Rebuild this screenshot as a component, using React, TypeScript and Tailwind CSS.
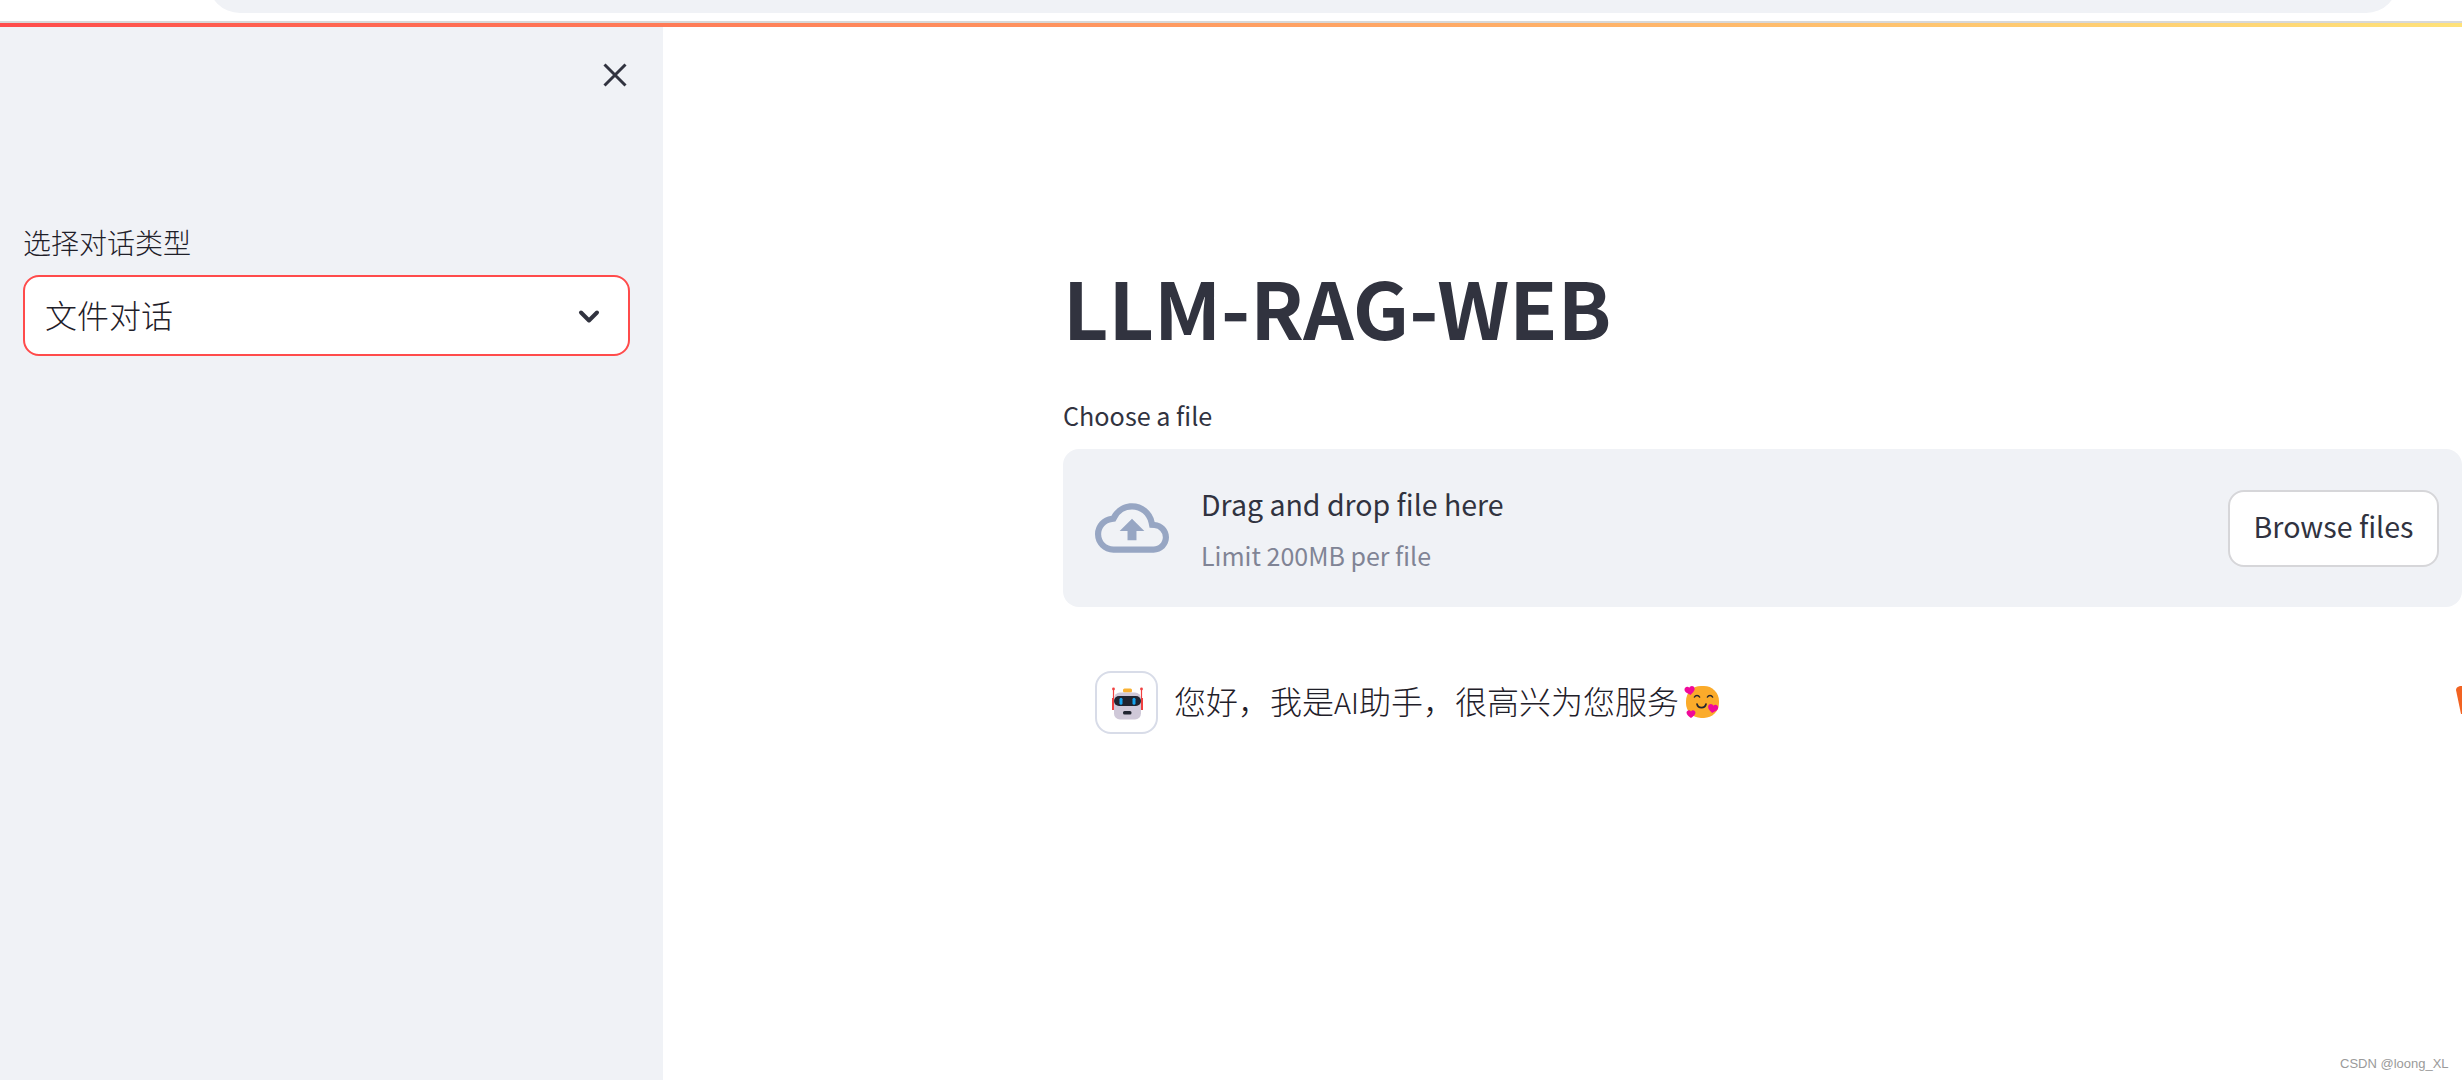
import { MdOutlineCloudUpload } from "react-icons/md";

const font = { fontFamily: '"Noto Sans CJK SC", sans-serif' };

function Robot() {
  return (
    <svg viewBox="0 0 40 40" width="40" height="40">
      <rect x="16" y="5.5" width="9" height="4" rx="1.5" fill="#f9b233" />
      <circle cx="6.5" cy="6" r="1.4" fill="#f04040" />
      <circle cx="34.5" cy="6" r="1.4" fill="#f04040" />
      <path d="M6.5 6v20M34.5 6v20" stroke="#f04040" strokeWidth="1.2" />
      <rect x="5" y="15" width="2.2" height="12" fill="#f04040" />
      <rect x="33.8" y="15" width="2.2" height="12" fill="#f04040" />
      <rect x="7" y="9.5" width="27" height="27" rx="6" fill="#cfc8d8" />
      <rect x="7" y="13" width="27" height="10" rx="5" fill="#202430" />
      <rect x="12.5" y="14.8" width="3" height="7" rx="1.5" fill="#16a4ee" />
      <rect x="25.5" y="14.8" width="3" height="7" rx="1.5" fill="#16a4ee" />
      <rect x="16" y="28" width="8.5" height="3.5" rx="1.5" fill="#202430" />
    </svg>
  );
}

function SmileHearts() {
  const heart = "M0 -2.6C-1.2 -5.4 -6 -4.8 -6 -1C-6 2 -2.2 4.4 0 6C2.2 4.4 6 2 6 -1C6 -4.8 1.2 -5.4 0 -2.6Z";
  return (
    <svg viewBox="0 0 38 36" width="38" height="36">
      <rect x="4" y="1" width="33" height="32" rx="15" fill="#fbab2a" />
      <path d="M12.5 12a2.8 2.8 0 0 1 5 0M25.5 12a2.8 2.8 0 0 1 5 0" fill="none" stroke="#26262c" strokeWidth="1.6" strokeLinecap="round" />
      <path d="M15 19a4.6 4.6 0 0 0 9 0" fill="none" stroke="#26262c" strokeWidth="1.7" strokeLinecap="round" />
      <path d={heart} transform="translate(7.7 5) rotate(-10) scale(0.85)" fill="#f0099a" />
      <path d={heart} transform="translate(31 23) rotate(10) scale(0.85)" fill="#f0099a" />
      <path d={heart} transform="translate(9 28.5) scale(0.75)" fill="#f0099a" />
    </svg>
  );
}

export default function App() {
  return (
    <div className="relative h-[1080px] w-full overflow-hidden bg-white flex flex-col text-[#31333f]" style={font}>
      <div className="h-[21px] shrink-0 pl-[208px] pr-[64px] overflow-hidden">
        <div className="h-[40px] mt-[-27px] rounded-b-[32px] bg-[#f0f2f6]" />
      </div>
      <div className="h-[2px] shrink-0 bg-[#d8d8d8]" />
      <div className="h-[4px] shrink-0 bg-gradient-to-r from-[#ff4b4b] to-[#ffe27a]" />
      <div className="flex flex-1 min-h-0">
        <aside className="w-[663px] shrink-0 bg-[#f0f2f6] pl-[23px] pr-[33px] flex flex-col">
          <div className="flex justify-end pt-[36px] h-[200px]">
            <svg viewBox="0 0 24 24" width="24" height="24" className="mr-[3px]" fill="none" stroke="#31333f" strokeWidth="3">
              <path d="M1.5 1.5L22.5 22.5M22.5 1.5L1.5 22.5" />
            </svg>
          </div>
          <div className="text-[28px] leading-[36px] mt-[-3px] font-light text-[#1f2029]">选择对话类型</div>
          <div className="mt-[15px] h-[81px] w-[607px] rounded-[16px] border-2 border-[#ff4b4b] bg-white flex items-center justify-between pl-[20px] pr-[27px]">
            <span className="text-[32px] leading-none font-light text-[#1f2029] pb-[4px]">文件对话</span>
            <svg viewBox="0 0 24 24" width="24" height="24" fill="none" stroke="#31333f" strokeWidth="4" strokeLinecap="round" strokeLinejoin="round">
              <path d="M4 8.5l8 8 8-8" />
            </svg>
          </div>
        </aside>
        <main className="flex-1 min-w-0 pl-[400px] overflow-hidden">
          <h1 className="mt-[229px] text-[78.7px] leading-[100px] font-bold whitespace-nowrap">LLM-RAG-WEB</h1>
          <div className="mt-[41px] text-[25.2px] leading-[36px]">Choose a file</div>
          <div className="mt-[16px] h-[158px] rounded-[16px] bg-[#f0f2f6] flex items-center justify-between pl-[32px] pr-[23px]">
            <div className="flex items-center">
              <MdOutlineCloudUpload className="w-[74px] h-[74px] text-[#97a6c3]" />
              <div className="ml-[32px] flex flex-col">
                <span className="text-[28.5px] leading-[44px] mt-[-1px]">Drag and drop file here</span>
                <span className="mt-[11px] text-[25px] leading-[36px] text-[#808495]">Limit 200MB per file</span>
              </div>
            </div>
            <button className="w-[211px] h-[77px] rounded-[16px] border-2 border-[#d6d6d9] bg-white text-[28.6px] pb-[3px]">Browse files</button>
          </div>
          <div className="relative mt-[64px] pl-[32px] flex items-center h-[63px]">
            <div className="w-[63px] h-[63px] shrink-0 rounded-[16px] border-2 border-[#d8dce8] bg-white flex items-center justify-center">
              <Robot />
            </div>
            <span className="ml-[16px] text-[32px] leading-none whitespace-nowrap pb-[6px] font-light text-[#1f2029]">您好，我是<span className="text-[29px]">AI</span>助手，很高兴为您服务</span>
            <span className="ml-[3px]"><SmileHearts /></span>
            <svg viewBox="0 0 6 28" width="6" height="28" className="absolute right-0 top-[15px]">
              <path d="M0 4Q0 1 4 0H6V28H5Z" fill="#f26322" />
            </svg>
          </div>
        </main>
      </div>
      <div className="absolute left-[2340px] top-[1056px] text-[13px] leading-[16px] text-[#9a9a9a] whitespace-nowrap" style={{ fontFamily: '"Liberation Sans", sans-serif' }}>CSDN @loong_XL</div>
    </div>
  );
}
